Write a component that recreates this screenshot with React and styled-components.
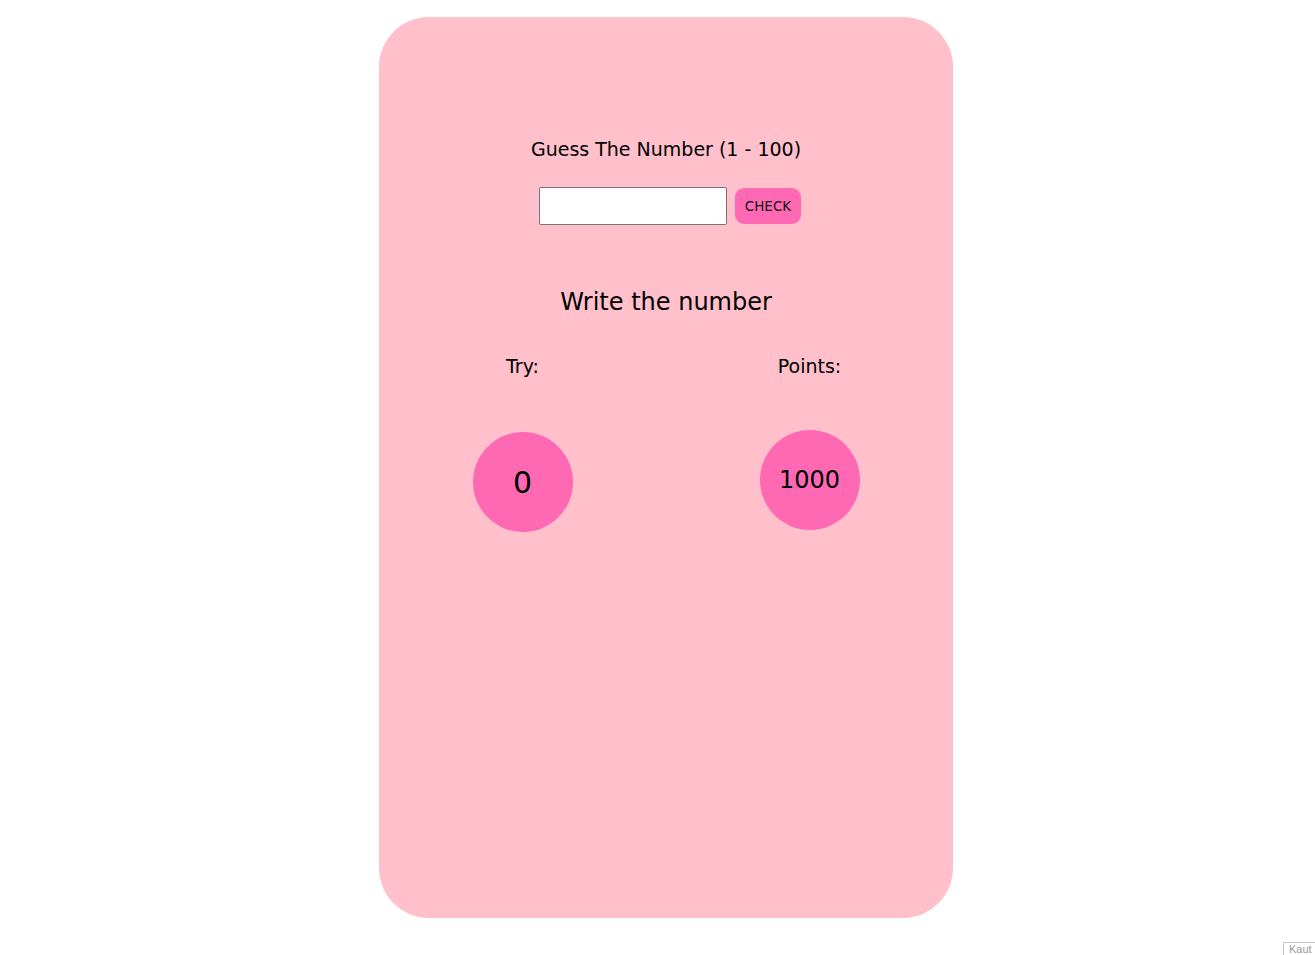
import React, { useState } from 'react';
import styled, { createGlobalStyle } from 'styled-components';

const GlobalStyle = createGlobalStyle`
  body {
    margin: 0;
    padding-left: 17px;
    background: #fff;
    font-family: "DejaVu Sans", Verdana, sans-serif;
  }
`

const Card = styled.div`
  width: 574px;
  height: 901px;
  margin: 17px auto 0;
  background: pink;
  border-radius: 50px;
  display: flex;
  flex-direction: column;
  align-items: center;
  box-sizing: border-box;
  padding-top: 121px;
  color: #000;
`

const Title = styled.div`
  font-size: 19px;
  line-height: 22px;
`

const Form = styled.form`
  display: flex;
  align-items: center;
  gap: 8px;
  margin: 27px 0 0 8px;
`

const Input = styled.input`
  width: 188px;
  height: 38px;
  box-sizing: border-box;
  border: 1px solid #767676;
  border-radius: 2px;
  background: #fff;
  padding: 0 4px;
`

const CheckButton = styled.button`
  width: 66px;
  height: 36px;
  border: none;
  border-radius: 9px;
  background: hotpink;
  color: #111;
  font-family: "DejaVu Sans", Verdana, sans-serif;
  font-size: 13.5px;
  cursor: pointer;
`

const Message = styled.div`
  font-size: 24px;
  line-height: 28px;
  margin-top: 63px;
`

const Stats = styled.div`
  display: grid;
  grid-template-columns: 1fr 1fr;
  width: 100%;
  margin-top: 39px;
`

const Stat = styled.div`
  display: flex;
  flex-direction: column;
  align-items: center;
`

const Label = styled.div`
  font-size: 19px;
  line-height: 22px;
`

const Circle = styled.div`
  width: 100px;
  height: 100px;
  border-radius: 50%;
  background: hotpink;
  display: flex;
  align-items: center;
  justify-content: center;
  font-size: ${p => p.big ? '30px' : '24px'};
  margin-top: ${p => p.offset}px;
`

const Badge = styled.div`
  position: fixed;
  right: -2px;
  bottom: -4px;
  width: 34px;
  height: 17px;
  border: 1px solid #c8c8c8;
  background: #fff;
  font-family: "Liberation Sans", Arial, sans-serif;
  font-size: 11px;
  color: #999;
  overflow: hidden;
  padding-left: 5px;
  box-sizing: border-box;
  white-space: nowrap;
`

const App = () => {
  const [value, setValue] = useState('')

  return (
    <>
      <GlobalStyle />
      <Card>
        <Title>Guess The Number (1 - 100)</Title>
        <Form onSubmit={e => e.preventDefault()}>
          <Input type="number" value={value} onChange={e => setValue(e.target.value)} />
          <CheckButton type="submit">CHECK</CheckButton>
        </Form>
        <Message>Write the number</Message>
        <Stats>
          <Stat>
            <Label>Try:</Label>
            <Circle big offset={55}>0</Circle>
          </Stat>
          <Stat>
            <Label>Points:</Label>
            <Circle offset={53}>1000</Circle>
          </Stat>
        </Stats>
      </Card>
      <Badge>Kaut</Badge>
    </>
  )
}

export default App
